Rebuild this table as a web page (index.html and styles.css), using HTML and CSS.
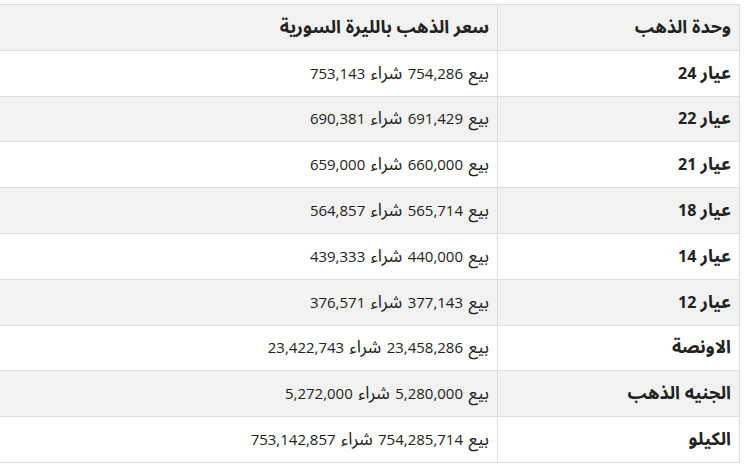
FILE: index.html
```html
<!DOCTYPE html>
<html lang="ar" dir="rtl">
<head>
<meta charset="utf-8">
<link rel="stylesheet" href="styles.css">
</head>
<body>
<div class="wrap">
<table class="prices">
<thead>
<tr><th class="unit"><span class="ar">وحدة الذهب</span></th><th class="price"><span class="ar">سعر الذهب بالليرة السورية</span></th></tr>
</thead>
<tbody>
<tr><td class="unit"><span class="ar">عيار</span> 24</td><td class="price"><span class="ar">بيع</span> 754,286 <span class="ar">شراء</span> 753,143</td></tr>
<tr><td class="unit"><span class="ar">عيار</span> 22</td><td class="price"><span class="ar">بيع</span> 691,429 <span class="ar">شراء</span> 690,381</td></tr>
<tr><td class="unit"><span class="ar">عيار</span> 21</td><td class="price"><span class="ar">بيع</span> 660,000 <span class="ar">شراء</span> 659,000</td></tr>
<tr><td class="unit"><span class="ar">عيار</span> 18</td><td class="price"><span class="ar">بيع</span> 565,714 <span class="ar">شراء</span> 564,857</td></tr>
<tr><td class="unit"><span class="ar">عيار</span> 14</td><td class="price"><span class="ar">بيع</span> 440,000 <span class="ar">شراء</span> 439,333</td></tr>
<tr><td class="unit"><span class="ar">عيار</span> 12</td><td class="price"><span class="ar">بيع</span> 377,143 <span class="ar">شراء</span> 376,571</td></tr>
<tr><td class="unit"><span class="ar">الاونصة</span></td><td class="price"><span class="ar">بيع</span> 23,458,286 <span class="ar">شراء</span> 23,422,743</td></tr>
<tr><td class="unit"><span class="ar">الجنيه الذهب</span></td><td class="price"><span class="ar">بيع</span> 5,280,000 <span class="ar">شراء</span> 5,272,000</td></tr>
<tr><td class="unit"><span class="ar">الكيلو</span></td><td class="price"><span class="ar">بيع</span> 754,285,714 <span class="ar">شراء</span> 753,142,857</td></tr>
</tbody>
</table>
</div>
</body>
</html>
```
FILE: styles.css
```css
html, body {
  margin: 0;
  padding: 0;
  background: #ffffff;
}
body {
  font-family: "Open Sans", "Noto Sans Arabic", "DejaVu Sans", sans-serif;
  color: #222222;
}
.wrap {
  padding-top: 4px;
  padding-right: 16px;
  margin-left: -1px;
}
.prices {
  width: 741px;
  border-collapse: collapse;
  table-layout: fixed;
}
.prices th,
.prices td {
  border: 1px solid #dddddd;
  text-align: right;
  padding: 0 8px 2px;
  height: 45.8px;
  box-sizing: border-box;
  vertical-align: middle;
  line-height: 20px;
}
.prices th {
  background: #f2f2f2;
  font-weight: 700;
  font-size: 15px;
}
.prices th .ar {
  font-size: 1.2em;
}
.prices td {
  font-size: 15px;
}
.prices td.price {
  word-spacing: 1.5px;
}
.prices td .ar {
  font-size: 1.17em;
}
.prices td.unit {
  font-weight: 700;
  font-size: 16px;
}
.prices td.unit .ar {
  font-size: 1.125em;
}
.prices .unit {
  width: 242px;
}
.prices tbody tr:nth-child(even) td {
  background: #f2f2f2;
}
```
